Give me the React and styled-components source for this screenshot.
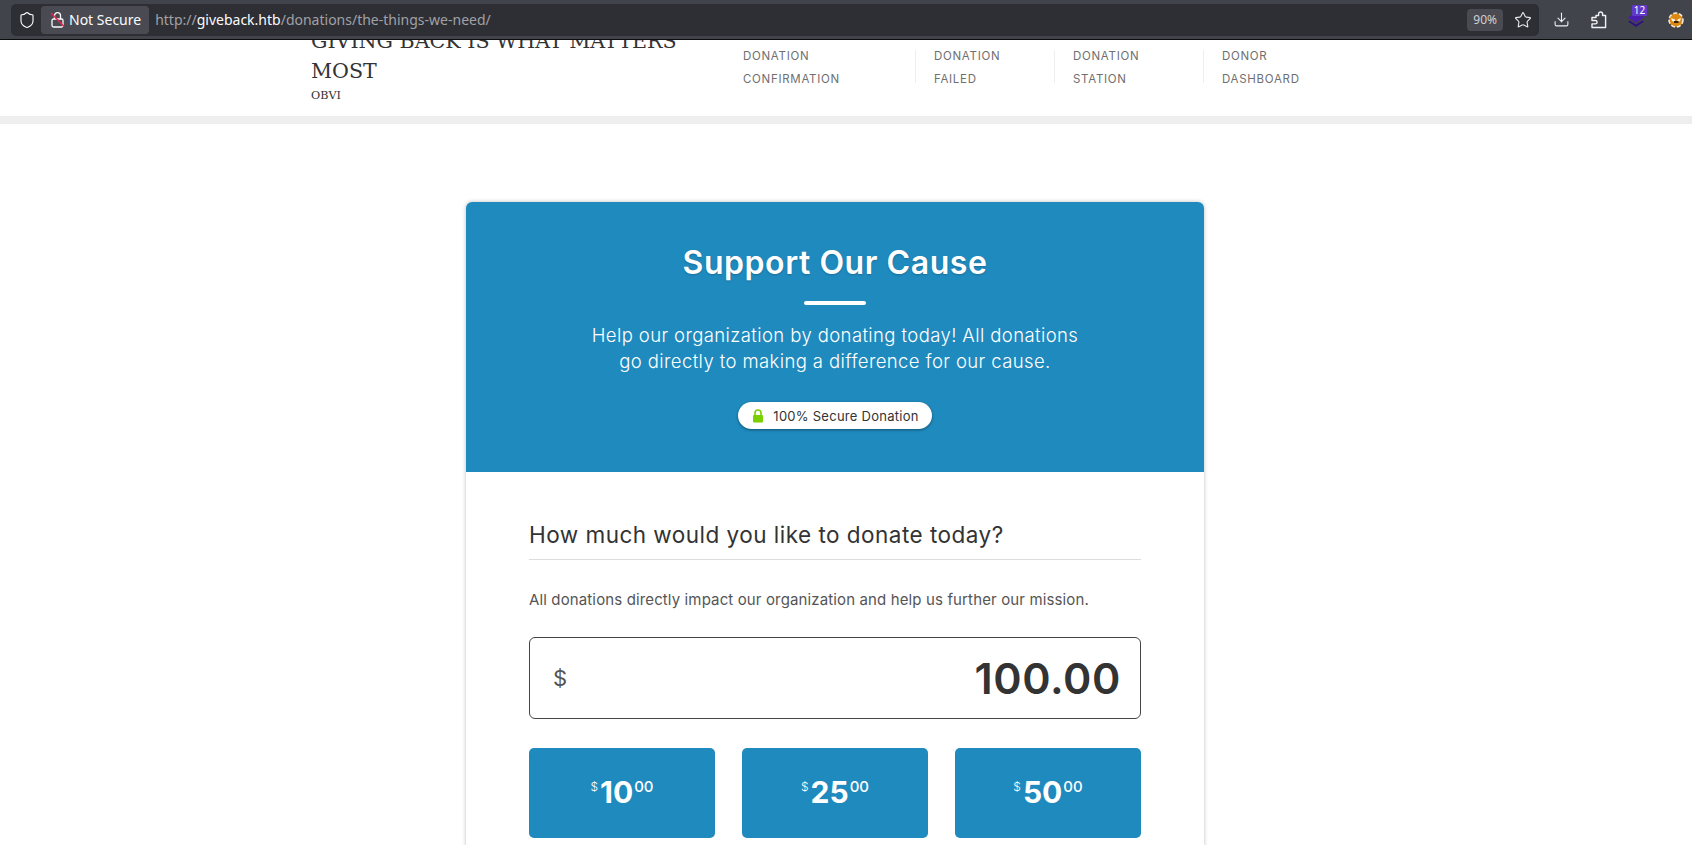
import React from 'react'
import styled, { createGlobalStyle } from 'styled-components'
import { Shield, Star, Download } from 'lucide-react'

const sans = `Inter, "Noto Sans", "Liberation Sans", sans-serif`

const GlobalStyle = createGlobalStyle`
  html, body {
    margin: 0;
    padding: 0;
    height: 845px;
    overflow: hidden;
    background: #fff;
  }
`

const Toolbar = styled.div`
  display: flex;
  align-items: center;
  height: 39px;
  padding: 0 0 0 11px;
  background: #42444c;
  border-bottom: 1px solid #0c0c0d;
  font-family: "Noto Sans", sans-serif;
`

const UrlBar = styled.div`
  display: flex;
  align-items: center;
  flex: none;
  width: 1528px;
  height: 32px;
  padding: 0 5px 0 7px;
  box-sizing: border-box;
  background: #2e2f35;
  border-radius: 5px;
  color: #fbfbfe;
`

const NotSecure = styled.div`
  display: flex;
  align-items: center;
  gap: 4px;
  height: 28px;
  margin-left: 5px;
  padding: 0 8px 0 9px;
  background: #4a4b52;
  border-radius: 4px;
  font-size: 14px;
`

const Url = styled.div`
  flex: 1;
  margin-left: 6px;
  font-size: 14px;
  color: #a0a1a6;
  b {
    font-weight: 400;
    color: #fbfbfe;
  }
`

const ZoomBadge = styled.div`
  display: flex;
  align-items: center;
  height: 22px;
  padding: 0 6px;
  background: #4a4b52;
  border-radius: 4px;
  color: #cfcfd3;
  font-size: 12px;
`

const StarButton = styled.span`
  display: flex;
  margin: 0 2px 0 11px;
  color: #e6e6e9;
`

const ToolSlot = styled.span`
  position: relative;
  display: flex;
  flex: none;
  justify-content: center;
  width: ${p => p.$w}px;
  color: #f2f2f4;
`

const ExtCount = styled.span`
  position: absolute;
  top: -7px;
  left: 19px;
  width: 15px;
  background: #6238c8;
  border-radius: 1px;
  color: #fff;
  font-size: 10px;
  line-height: 11px;
  text-align: center;
`

const Page = styled.main`
  font-family: ${sans};
`

const Masthead = styled.header`
  height: 76px;
  background: #fff;
  border-bottom: 8px solid #eee;
  overflow: hidden;
`

const MastInner = styled.div`
  display: flex;
  margin: -14px 0 0 311px;
`

const Brand = styled.div`
  width: 400px;
  font-family: "DejaVu Serif", serif;
  color: #333;
`

const BrandTitle = styled.h1`
  margin: 0;
  font-size: 20.6px;
  font-weight: 400;
  line-height: 30px;
`

const BrandTag = styled.p`
  margin: 2px 0 0;
  font-size: 11.2px;
  line-height: 16px;
`

const Nav = styled.nav`
  display: flex;
  margin: 24px 0 0 32px;
`

const NavItem = styled.a`
  display: block;
  width: ${p => p.$w}px;
  height: 33px;
  padding: 0 0 0 ${p => p.$first ? 0 : 18}px;
  border-left: ${p => p.$first ? 'none' : '1px solid #eee'};
  box-sizing: border-box;
  font-size: 11.5px;
  line-height: 23px;
  letter-spacing: 0.7px;
  color: #6f6f6f;
  text-transform: uppercase;
  span {
    display: block;
    margin-top: -5px;
    &:last-child {
      margin-top: 0;
    }
  }
`

// the site column is centred next to a scrollbar gutter
const CardColumn = styled.div`
  padding-right: 22px;
`

const Card = styled.section`
  width: 738px;
  margin: 78px auto 0;
  border-radius: 6px;
  background: #fff;
  box-shadow: 0 0 4px rgba(0, 0, 0, 0.25);
`

const Hero = styled.div`
  display: flex;
  flex-direction: column;
  align-items: center;
  height: 270px;
  padding-top: 42px;
  box-sizing: border-box;
  background: #1f8abe;
  border-radius: 6px 6px 0 0;
  color: #fff;
  text-align: center;
`

const HeroTitle = styled.h2`
  margin: 0;
  font-size: 32px;
  font-weight: 600;
  line-height: 38px;
  letter-spacing: 0.55px;
  text-shadow: 0 1px 2px rgba(0, 0, 0, 0.2);
`

const HeroRule = styled.div`
  width: 62px;
  height: 4px;
  margin: 19px 0 0;
  background: #fff;
  border-radius: 2px;
`

const HeroText = styled.p`
  margin: 17px 0 0;
  font-size: 18.5px;
  font-weight: 300;
  line-height: 26px;
  letter-spacing: 0.4px;
`

const SecurePill = styled.div`
  display: flex;
  align-items: center;
  gap: 9px;
  height: 27px;
  margin-top: 28px;
  padding: 0 13px 0 14px;
  background: #fff;
  border-radius: 14px;
  box-shadow: 0 1px 3px rgba(0, 0, 0, 0.4);
  color: #333;
  font-size: 13px;
  letter-spacing: 0.26px;
`

const Body = styled.div`
  padding: 48px 63px 40px;
`

const Question = styled.h3`
  margin: 0;
  padding-bottom: 9px;
  border-bottom: 1px solid #ddd;
  color: #333;
  font-size: 22.5px;
  font-weight: 400;
  line-height: 30px;
  letter-spacing: 0.48px;
`

const Lead = styled.p`
  margin: 30px 0 0;
  color: #555;
  font-size: 15px;
  line-height: 20px;
  letter-spacing: 0.13px;
`

const AmountBox = styled.div`
  display: flex;
  align-items: center;
  justify-content: space-between;
  height: 82px;
  margin-top: 27px;
  padding: 0 19px 0 23px;
  box-sizing: border-box;
  border: 1px solid #444;
  border-radius: 6px;
  color: #333;
`

const Currency = styled.span`
  font-size: 22px;
  color: #555;
`

const Amount = styled.span`
  font-size: 43px;
  font-weight: 600;
  letter-spacing: 0.6px;
`

const Levels = styled.div`
  display: grid;
  grid-template-columns: repeat(3, 186px);
  justify-content: space-between;
  margin-top: 29px;
`

const Level = styled.button`
  display: flex;
  align-items: flex-start;
  justify-content: center;
  height: 90px;
  padding: 27px 0 0;
  border: none;
  border-radius: 5px;
  background: #1f8abe;
  color: #fff;
  font-family: inherit;
`

const LevelDollar = styled.span`
  margin: 4px 2px 0 0;
  font-size: 12px;
  font-weight: 300;
`

const LevelMain = styled.span`
  font-size: 30px;
  font-weight: 700;
  line-height: 34px;
`

const LevelCents = styled.span`
  margin: 2px 0 0 1px;
  font-size: 15px;
  font-weight: 500;
`

const navItems = [
  { lines: ['Donation', 'Confirmation'], w: 172 },
  { lines: ['Donation', 'Failed'], w: 139 },
  { lines: ['Donation', 'Station'], w: 149 },
  { lines: ['Donor', 'Dashboard'], w: 130 }
]

const InsecureLock = () => (
  <svg width="15" height="17" viewBox="0 0 15 17" fill="none">
    <rect x="2" y="8" width="11" height="8" rx="1.5" stroke="#fbfbfe" strokeWidth="1.3" />
    <path d="M4.5 8V4.6a3 3 0 0 1 6 0V8" stroke="#fbfbfe" strokeWidth="1.3" />
    <path d="M1 2l13 13.5" stroke="#e22850" strokeWidth="1.6" />
  </svg>
)

const PuzzleIcon = () => (
  <svg width="17" height="18" viewBox="0 0 17 18" fill="none" stroke="currentColor" strokeWidth="1.4" strokeLinejoin="round">
    <path d="M6 4.5h2.6V3a2 2 0 0 1 4 0v1.5h3v12H2v-3.6h3.4a1.7 1.7 0 0 0 0-3.4H2V6.5h4z" />
  </svg>
)

const GreenLock = () => (
  <svg width="12" height="14" viewBox="0 0 12 14">
    <path d="M3 6.5V4a3 3 0 0 1 6 0v2.5" fill="none" stroke="#7ad000" strokeWidth="1.6" />
    <rect x="1" y="6" width="10" height="7.5" rx="1" fill="#7ad000" />
  </svg>
)

const StackIcon = () => (
  <svg width="16" height="15" viewBox="0 0 16 15">
    <path d="M8 0 16 5.5 8 10.5 0 5.5z" fill="#4a1db0" />
    <path d="M1.5 8.5 8 12.5l6.5-4L16 9.500 8 15 0 9.500z" fill="#2f1280" />
  </svg>
)

const FoxAvatar = () => (
  <svg width="16" height="16" viewBox="0 0 16 16">
    <circle cx="8" cy="8" r="7" fill="#dd8a14" stroke="#f2efe6" strokeWidth="1.5" strokeDasharray="4 2" />
    <path d="M3 6l4 1.500v2.500L4 9zM13 6 9.500 7.500 9 10l3-1z" fill="#f8f3e6" />
    <path d="M6 9h4.500v2H6z" fill="#3a2408" />
  </svg>
)

const App = () => (
  <React.Fragment>
    <GlobalStyle />
    <Toolbar>
      <UrlBar>
        <Shield size={18} strokeWidth={1.5} />
        <NotSecure>
          <InsecureLock />
          Not Secure
        </NotSecure>
        <Url>http://<b>giveback.htb</b>/donations/the-things-we-need/</Url>
        <ZoomBadge>90%</ZoomBadge>
        <StarButton><Star size={18} strokeWidth={1.5} /></StarButton>
      </UrlBar>
      <ToolSlot $w={44}><Download size={17} strokeWidth={1.5} /></ToolSlot>
      <ToolSlot $w={30}><PuzzleIcon /></ToolSlot>
      <ToolSlot $w={46}>
        <StackIcon />
        <ExtCount>12</ExtCount>
      </ToolSlot>
      <ToolSlot $w={33}><FoxAvatar /></ToolSlot>
    </Toolbar>
    <Page>
      <Masthead>
        <MastInner>
          <Brand>
            <BrandTitle>GIVING BACK IS WHAT MATTERS MOST</BrandTitle>
            <BrandTag>OBVI</BrandTag>
          </Brand>
          <Nav>
            {navItems.map((item, i) =>
              <NavItem key={item.lines.join()} $w={item.w} $first={i === 0}>
                {item.lines.map(l => <span key={l}>{l}</span>)}
              </NavItem>
            )}
          </Nav>
        </MastInner>
      </Masthead>
      <CardColumn>
        <Card>
          <Hero>
            <HeroTitle>Support Our Cause</HeroTitle>
            <HeroRule />
            <HeroText>
              Help our organization by donating today! All donations<br />
              go directly to making a difference for our cause.
            </HeroText>
            <SecurePill>
              <GreenLock />
              100% Secure Donation
            </SecurePill>
          </Hero>
          <Body>
            <Question>How much would you like to donate today?</Question>
            <Lead>All donations directly impact our organization and help us further our mission.</Lead>
            <AmountBox>
              <Currency>$</Currency>
              <Amount>100.00</Amount>
            </AmountBox>
            <Levels>
              {['10', '25', '50'].map(v =>
                <Level key={v}>
                  <LevelDollar>$</LevelDollar>
                  <LevelMain>{v}</LevelMain>
                  <LevelCents>00</LevelCents>
                </Level>
              )}
            </Levels>
          </Body>
        </Card>
      </CardColumn>
    </Page>
  </React.Fragment>
)

export default App
